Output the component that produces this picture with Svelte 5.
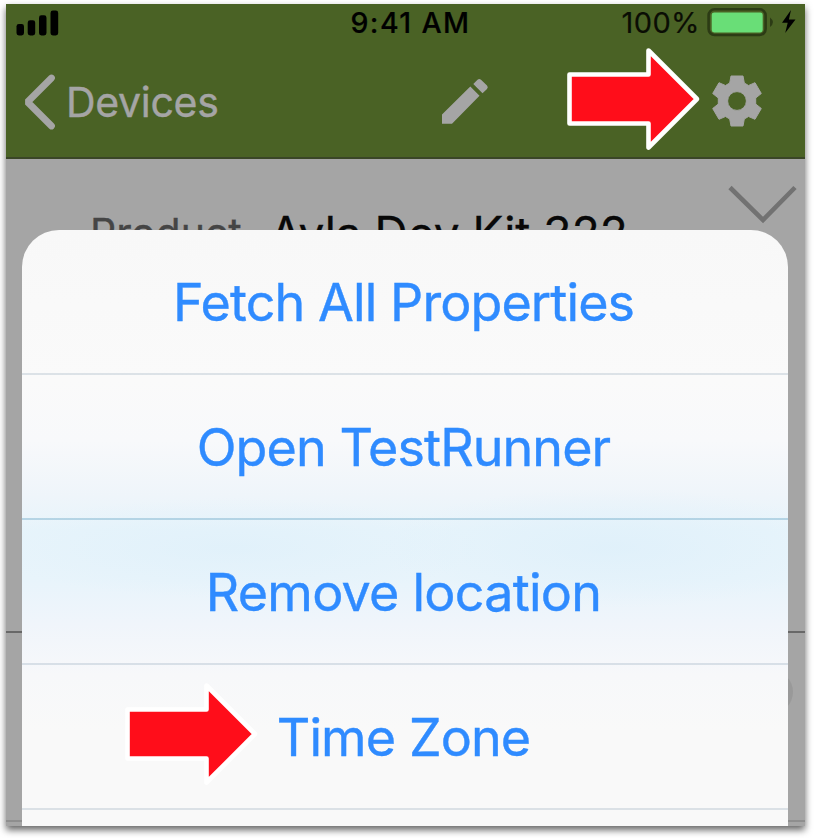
<script>
  const actions = [
    { label: 'Fetch All Properties', cls: 'fetch' },
    { label: 'Open TestRunner', cls: 'open' },
    { label: 'Remove location', cls: 'remove' },
    { label: 'Time Zone', cls: 'zone' }
  ];
</script>

<main>
  <div class="phone">
    <header>
      <div class="status">
        <svg class="signal" width="43" height="27" viewBox="0 0 43 27">
          <rect x="0.5" y="14" width="7.5" height="11.5" rx="2.4" />
          <rect x="11.7" y="10.3" width="7.5" height="15.2" rx="2.4" />
          <rect x="23" y="5.3" width="7.5" height="20.2" rx="2.4" />
          <rect x="34.5" y="0.5" width="7.7" height="25" rx="2.4" />
        </svg>
        <span class="time">9:41 AM</span>
        <div class="power">
          <span class="percent">100%</span>
          <svg width="89" height="30" viewBox="0 0 89 30">
            <rect x="1.6" y="2.3" width="57" height="25.700" rx="6" fill="none" stroke="#2c3b15" stroke-width="2.6" />
            <rect x="4.700" y="5.400" width="51" height="20" rx="2.400" fill="#69de77" />
            <path d="M63 10.500q6 4.700 0 9.500z" fill="#2c3b15" />
            <path d="M84 3L75 15.700h5.700L78.200 26 88.500 12.600h-6.600z" />
          </svg>
        </div>
      </div>
      <nav>
        <div class="back">
          <svg width="34" height="58" viewBox="0 0 34 58">
            <path d="M28.500 5L4.500 29L28.500 53" fill="none" stroke="#a5a5a5" stroke-width="6.800" stroke-linecap="round" stroke-linejoin="bevel" />
          </svg>
          <span>Devices</span>
        </div>
        <svg class="pencil" width="48" height="48" viewBox="0 0 48 48">
          <path d="M1 37.500L29.300 9.500L38.500 18.700L11 46.700H1zM32.300 7L36.500 2.700Q38.300 1.200 40 2.700L46 8.500Q47.600 10.200 46 11.900L41.500 16.200z" fill="#a5a5a5" />
        </svg>
        <svg class="gear" width="62" height="62" viewBox="-31 -31 62 62">
          <path fill="#a5a5a5" stroke="#a5a5a5" stroke-width="1" stroke-linejoin="round" fill-rule="evenodd" d="M-6-25H6L7.300-18L11.500-15.500L18-18.300L24.300-7.500L18.700-3V3L24.300 7.500L18 18.300L11.500 15.500L7.300 18L6 25H-6L-7.300 18L-11.500 15.500L-18 18.300L-24.300 7.500L-18.700 3V-3L-24.300-7.500L-18-18.300L-11.500-15.500L-7.300-18zM0-9.400A9.400 9.400 0 1 0 0 9.400A9.400 9.400 0 1 0 0-9.400z" />
        </svg>
      </nav>
    </header>

    <section class="details">
      <div class="row">
        <span class="key">Product</span>
        <span class="value">Ayla Dev Kit 322</span>
        <svg class="down" width="70" height="40" viewBox="0 0 70 40">
          <path d="M2 2.500L35 35L67 2.500" fill="none" stroke="#727272" stroke-width="4.600" />
        </svg>
      </div>
    </section>
    <section class="lower"><i class="toggle"></i></section>

    <div class="sheet">
      {#each actions as action}
        <button><span class={action.cls}>{action.label}</span></button>
      {/each}
    </div>
  </div>

  {#each ['first', 'second'] as place}
    <svg class="arrow {place}" width="136" height="104" viewBox="0 0 136 104">
      <path d="M4.500 27.500H83.500V3.500L132 52L83.500 100.500V76.500H4.500z" fill="#ff0d1a" stroke="#fff" stroke-width="4.600" stroke-linejoin="round" />
    </svg>
  {/each}
</main>

<style>
  :global(body) { background: #fff; }
  main {
    position: relative;
    width: 814px;
    height: 838px;
    box-sizing: border-box;
    padding: 4px 9px 12px 6px;
    overflow: hidden;
    background: #fff;
    font-family: Inter, "Liberation Sans", sans-serif;
  }
  .phone {
    position: relative;
    height: 822px;
    display: flex;
    flex-direction: column;
    overflow: hidden;
    background: #a5a5a5;
  }
  main::before {
    content: "";
    position: absolute;
    left: 6px;
    top: 4px;
    width: 799px;
    height: 822px;
    box-shadow: 0 4px 7px rgba(0, 0, 0, 0.6);
  }
  header {
    height: 155px;
    box-sizing: border-box;
    flex: none;
    background: #4a6225;
    border-bottom: 2px solid #3a4627;
    color: #000;
  }
  .status {
    height: 36px;
    display: grid;
    grid-template-columns: 250px 1fr 250px;
    align-items: center;
  }
  .signal { margin: 3px 0 0 10px; }
  .time { text-align: center; font-size: 28.500px; font-weight: 500; letter-spacing: 1.400px; padding-left: 10px; -webkit-text-stroke: 0.2px; }
  .power { display: flex; align-items: center; justify-content: flex-end; gap: 7px; padding-right: 9px; }
  .percent { font-size: 29px; color: #0a0d04; letter-spacing: 0.400px; -webkit-text-stroke: 0.2px; }
  nav {
    display: flex;
    align-items: center;
    padding-top: 1px;
    height: 116px;
    box-sizing: border-box;
    color: #a5a5a5;
  }
  .back { display: flex; align-items: center; gap: 9px; width: 435px; padding: 6px 0 0 17px; box-sizing: border-box; font-size: 41px; letter-spacing: -0.300px; -webkit-text-stroke: 0.4px; }
  .pencil { margin-top: 4px; }
  .gear { margin: 4px 0 0 217px; }
  .details { height: 474px; box-sizing: border-box; border-bottom: 2px solid #686868; flex: none; }
  .row { display: flex; padding: 24px 8px 0 84px; line-height: 101px; white-space: nowrap; }
  .key { width: 180px; color: #454545; font-size: 41px; -webkit-text-stroke: 0.3px; }
  .value { flex: 1; color: #080808; font-size: 46px; -webkit-text-stroke: 0.3px; }
  .down { margin: 2px -1px 0 0; }
  .lower { position: relative; height: 189px; box-sizing: border-box; border-bottom: 2px solid #8e8e8e; flex: none; }
  .toggle { position: absolute; right: 12px; top: 37px; width: 44px; height: 44px; border-radius: 50%; background: #999; }
  .sheet {
    position: absolute;
    left: 16px;
    right: 17px;
    top: 226px;
    height: 640px;
    border-radius: 37px 37px 0 0;
    overflow: hidden;
    background:
      radial-gradient(ellipse 230px 60px at 590px 318px, rgba(221, 239, 250, 0.7), transparent),
      radial-gradient(ellipse 250px 50px at 210px 318px, rgba(221, 239, 250, 0.6), transparent),
      linear-gradient(#f8f8f8 0, #fafafa 150px, #f8f9fb 210px, #eff5fa 265px, #e7f4fb 300px, #e8f4fb 350px, #f0f5fb 395px, #f7f8fa 445px, #f9f9f9 500px, #f9f9f9 100%);
  }
  button {
    display: flex;
    align-items: center;
    justify-content: center;
    width: 100%;
    height: 145px;
    padding: 2px 3px 0 0;
    border: 0;
    border-bottom: 2px solid rgba(85, 115, 145, 0.18);
    background: none;
    color: #2f8bff;
    font: 400 52px Inter, "Liberation Sans", sans-serif;
    letter-spacing: -0.900px;
    -webkit-text-stroke: 0.4px;
    white-space: nowrap;
  }
  .remove { letter-spacing: -0.750px; }
  button:nth-child(2) { border-bottom-color: rgba(70, 145, 185, 0.32); }
  .arrow { position: absolute; }
  .first { left: 565px; top: 47px; }
  .second { left: 123px; top: 682px; }
</style>
